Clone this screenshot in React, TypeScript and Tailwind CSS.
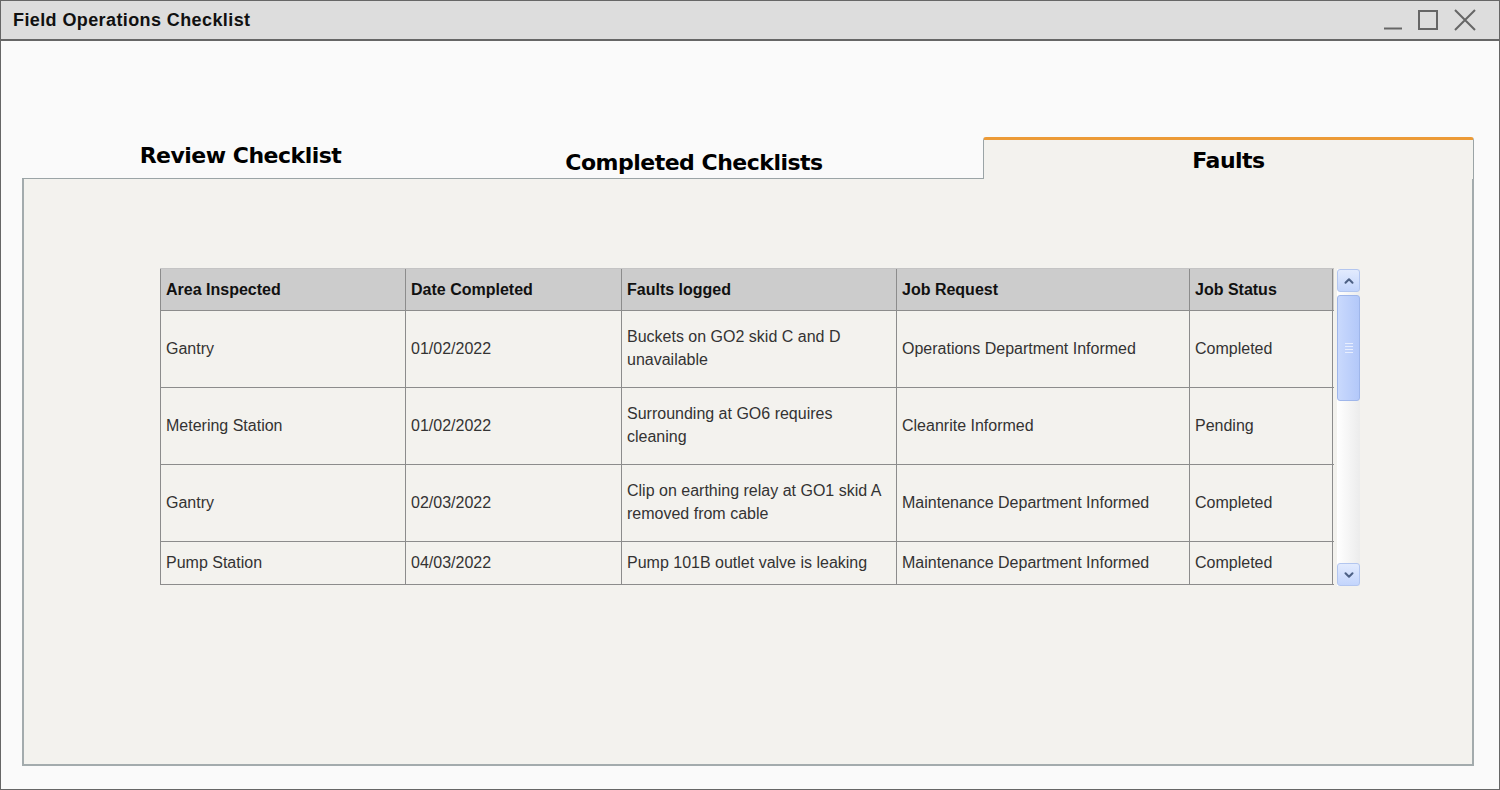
import { ChevronDown, ChevronUp } from "lucide-react";

type Fault = {
    area: string;
    date: string;
    fault: string;
    request: string;
    status: string;
    tall: boolean;
};

const faults: Fault[] = [
    { area: "Gantry", date: "01/02/2022", fault: "Buckets on GO2 skid C and D unavailable", request: "Operations Department Informed", status: "Completed", tall: true },
    { area: "Metering Station", date: "01/02/2022", fault: "Surrounding at GO6 requires cleaning", request: "Cleanrite Informed", status: "Pending", tall: true },
    { area: "Gantry", date: "02/03/2022", fault: "Clip on earthing relay at GO1 skid A removed from cable", request: "Maintenance Department Informed", status: "Completed", tall: true },
    { area: "Pump Station", date: "04/03/2022", fault: "Pump 101B outlet valve is leaking", request: "Maintenance Department Informed", status: "Completed", tall: false },
];

const columns = [
    { label: "Area Inspected", width: "w-[246px]" },
    { label: "Date Completed", width: "w-[216px]" },
    { label: "Faults logged", width: "w-[275px]" },
    { label: "Job Request", width: "w-[293px]" },
    { label: "Job Status", width: "w-[143px]" },
];

function WindowControls() {
    return (
        <div className="flex items-center gap-[16px] pr-[23px]">
            {/* minimize */}
            <svg width="18" height="20" viewBox="0 0 18 20">
                <line x1="0" y1="18.5" x2="18" y2="18.5" stroke="#666" strokeWidth="2" />
            </svg>
            {/* maximize */}
            <svg width="20" height="20" viewBox="0 0 20 20">
                <rect x="1" y="1" width="18" height="18" fill="none" stroke="#666" strokeWidth="2" />
            </svg>
            {/* close */}
            <svg width="22" height="22" viewBox="0 0 22 22">
                <path d="M1 1 L21 21 M21 1 L1 21" stroke="#666" strokeWidth="2" />
            </svg>
        </div>
    );
}

function Scrollbar() {
    return (
        <div className="flex flex-col w-[23px] h-[317px] mt-[1px] bg-gradient-to-r from-[#ffffff] to-[#ececec]">
            {/* up button */}
            <div className="flex items-center justify-center h-[23px] rounded-[3px] border border-[#b3c6ef] bg-gradient-to-b from-[#e2ebfe] to-[#c3d5fc]">
                <ChevronUp size={14} strokeWidth={3.5} className="text-[#4d6185]" />
            </div>
            {/* thumb */}
            <div className="flex items-center justify-center mt-[3px] h-[106px] rounded-[3px] border border-[#9fb6ea] bg-gradient-to-r from-[#c9d9fd] to-[#b3c8f9]">
                <div className="flex flex-col gap-[2px]">
                    <div className="w-[8px] h-px bg-[#e8eefe]" />
                    <div className="w-[8px] h-px bg-[#e8eefe]" />
                    <div className="w-[8px] h-px bg-[#e8eefe]" />
                    <div className="w-[8px] h-px bg-[#e8eefe]" />
                </div>
            </div>
            <div className="flex-1" />
            {/* down button */}
            <div className="flex items-center justify-center h-[23px] rounded-[3px] border border-[#b3c6ef] bg-gradient-to-b from-[#e2ebfe] to-[#c3d5fc]">
                <ChevronDown size={14} strokeWidth={3.5} className="text-[#4d6185]" />
            </div>
        </div>
    );
}

function FaultsTable() {
    return (
        <div className="flex ml-[136px] mt-[89px] gap-[3px]">
            <div className="w-[1174px] text-[16px] font-['Liberation_Sans',Arial,sans-serif]">
                {/* header */}
                <div className="flex h-[43px] bg-[#cccccc] border-t border-[#c4c4c4] border-b border-b-[#8c8c8c]">
                    {columns.map((col, i) => (
                        <div
                            key={col.label}
                            className={`${col.width} flex items-center px-[5px] font-bold text-[#111] border-r border-[#8c8c8c] ${i === 0 ? "border-l" : ""}`}
                        >
                            {col.label}
                        </div>
                    ))}
                </div>
                {/* rows */}
                {faults.map((f, r) => (
                    <div
                        key={r}
                        className={`flex ${f.tall ? "h-[77px]" : "h-[43px]"} border-b border-[#8c8c8c] text-[#333] leading-[23px]`}
                    >
                        {[f.area, f.date, f.fault, f.request, f.status].map((val, i) => (
                            <div
                                key={i}
                                className={`${columns[i].width} flex items-center px-[5px] pb-[2px] border-r border-[#8c8c8c] ${i === 0 ? "border-l" : ""}`}
                            >
                                {val}
                            </div>
                        ))}
                    </div>
                ))}
            </div>
            <Scrollbar />
        </div>
    );
}

export default function App() {
    return (
        <div className="w-[1500px] h-[790px] flex flex-col border border-[#666] bg-[#fafafa] overflow-hidden">
            {/* title bar */}
            <div className="flex items-center justify-between h-[40px] shrink-0 bg-[#dddddd] border-b-2 border-[#666]">
                <span className="pl-[12px] text-[18px] tracking-[0.4px] font-bold text-[#111] font-['Liberation_Sans',Arial,sans-serif]">
                    Field Operations Checklist
                </span>
                <WindowControls />
            </div>

            <div className="flex flex-col pl-[21px] pr-[25px] pt-[96px] font-['DejaVu_Sans',Tahoma,sans-serif]">
                {/* tabs */}
                <div className="flex h-[42px]">
                    <div className="flex w-[961px] border-b border-[#9ba4a6]">
                        <div className="w-[437px] pt-[5px] text-center text-[22px] leading-[28px] font-bold tracking-[-0.5px] text-black">
                            Review Checklist
                        </div>
                        <div className="w-[470px] pt-[12px] text-center text-[22px] leading-[28px] font-bold tracking-[-0.5px] text-black">
                            Completed Checklists
                        </div>
                    </div>
                    <div className="flex-1 pt-[7px] text-center text-[22px] leading-[28px] font-bold tracking-[-0.5px] text-black bg-[#f3f2ee] border-t-[3px] border-t-[#ec9a36] border-x border-x-[#9ba4a6] rounded-t-[3px]">
                        Faults
                    </div>
                </div>

                {/* panel */}
                <div className="h-[587px] bg-[#f3f2ee] border-x-2 border-b-2 border-[#a3abad]">
                    <FaultsTable />
                </div>
            </div>
        </div>
    );
}
